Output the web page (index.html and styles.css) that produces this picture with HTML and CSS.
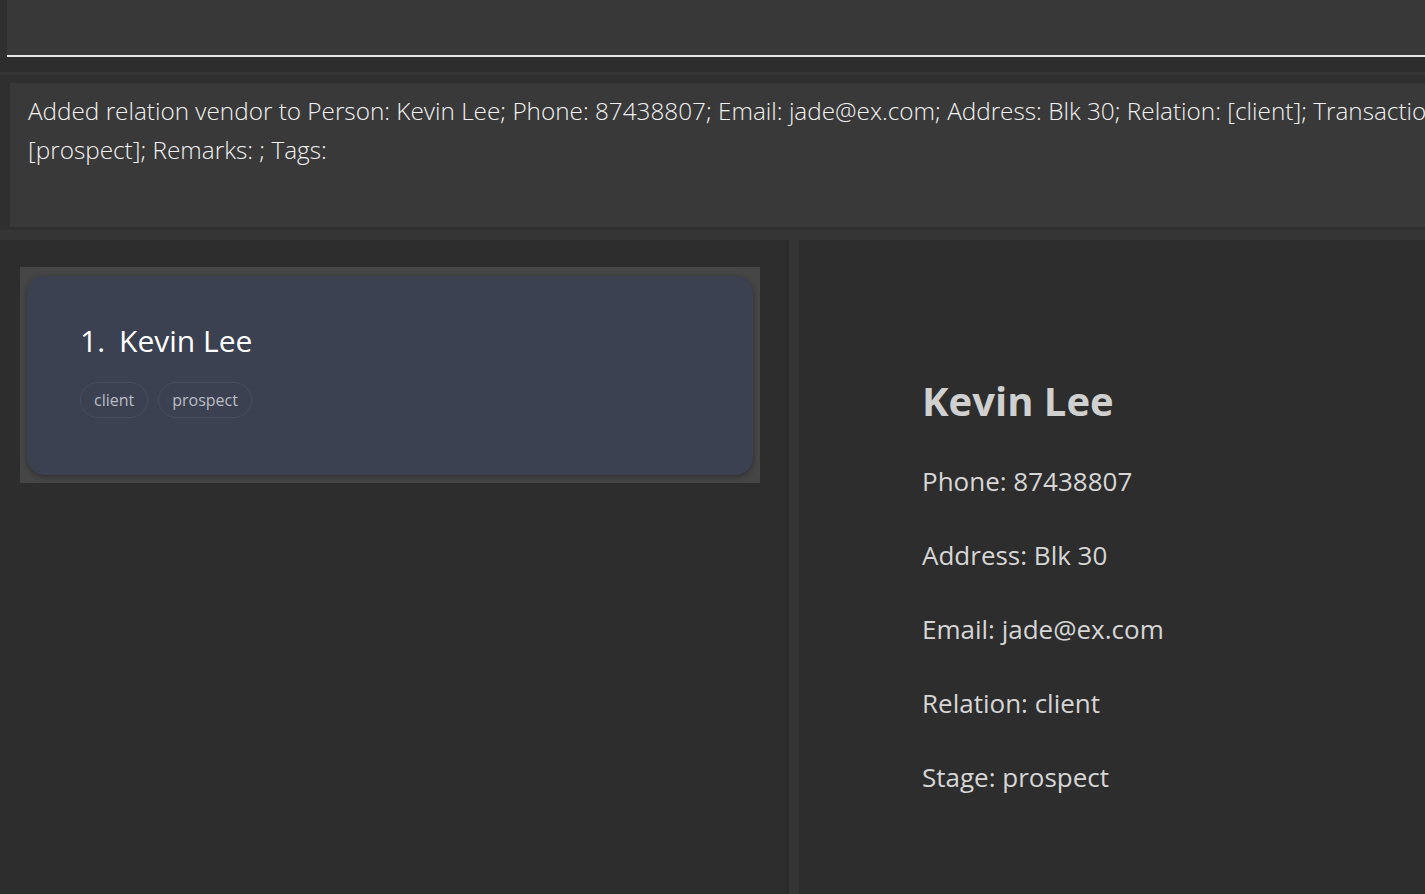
FILE: index.html
```html
<!DOCTYPE html>
<html>
<head>
<meta charset="utf-8">
<link rel="stylesheet" href="styles.css">
</head>
<body>
<div class="app">
  <div class="command-bar">
    <div class="command-field"></div>
  </div>
  <div class="result-wrap">
    <div class="result-box">Added relation vendor to Person: Kevin Lee; Phone: 87438807; Email: jade@ex.com; Address: Blk 30; Relation: [client]; Transaction Stage: [prospect]; Remarks: ; Tags:</div>
  </div>
  <div class="band"></div>
  <div class="main">
    <div class="list-panel">
      <div class="card-cell">
        <div class="card">
          <div class="card-name"><span class="idx">1.</span>Kevin Lee</div>
          <div class="tags">
            <span class="tag">client</span>
            <span class="tag">prospect</span>
          </div>
        </div>
      </div>
    </div>
    <div class="divider"></div>
    <div class="detail-panel">
      <h1 class="detail-name">Kevin Lee</h1>
      <p class="detail-line">Phone: 87438807</p>
      <p class="detail-line">Address: Blk 30</p>
      <p class="detail-line">Email: jade@ex.com</p>
      <p class="detail-line">Relation: client</p>
      <p class="detail-line">Stage: prospect</p>
    </div>
  </div>
</div>
</body>
</html>
```
FILE: styles.css
```css
html, body {
  margin: 0;
  padding: 0;
  background: #2d2d2d;
  font-family: "Open Sans", "Noto Sans", sans-serif;
  overflow: hidden;
}
.app {
  width: 1425px;
  height: 894px;
  display: flex;
  flex-direction: column;
  overflow: hidden;
}
.command-bar {
  height: 57px;
  padding-left: 7px;
  background: #2f2f2f;
  box-sizing: border-box;
}
.command-field {
  height: 57px;
  background: #383838;
  border-bottom: 2px solid #e6e6e6;
  box-sizing: border-box;
}
.result-wrap {
  margin-top: 15px;
  border-top: 3px solid #353535;
  padding: 8px 0 3px 10px;
  background: #2f2f2f;
  overflow: hidden;
}
.result-box {
  height: 144px;
  background: #393939;
  color: #f2f2f2;
  font-size: 24.3px;
  line-height: 39px;
  padding: 8px 0 0 18px;
  box-sizing: border-box;
  white-space: normal;
  width: 1560px;
  overflow: hidden;
  font-weight: 300;
}
.band {
  height: 10px;
  background: #353535;
}
.main {
  flex: 1;
  display: flex;
}
.list-panel {
  width: 787px;
  background: #2d2d2d;
  padding: 27px 0 0 20px;
  box-sizing: border-box;
}
.card-cell {
  width: 740px;
  height: 216px;
  background: #464646;
  padding: 9px 7px 8px 7px;
  box-sizing: border-box;
}
.card {
  height: 100%;
  background: #3b4150;
  border-radius: 18px;
  box-shadow: 0 2px 6px rgba(0,0,0,0.35);
  padding: 45px 0 0 53px;
  box-sizing: border-box;
}
.card-name {
  color: #ffffff;
  font-size: 30px;
  line-height: 40px;
  font-weight: 400;
}
.idx {
  margin-right: 14px;
}
.tags {
  display: flex;
  gap: 10px;
  margin-top: 21px;
}
.tag {
  display: inline-block;
  height: 36px;
  line-height: 34px;
  padding: 0 13px;
  border: 1px solid #474d5c;
  border-radius: 18px;
  color: #b9bdc6;
  font-size: 16px;
  box-sizing: border-box;
}
.divider {
  width: 12px;
  background: #353535;
  border-left: 2px solid #2a2a2a;
  box-sizing: border-box;
}
.detail-panel {
  flex: 1;
  background: #2d2d2d;
  padding: 134px 0 0 123px;
  box-sizing: border-box;
}
.detail-name {
  margin: 0 0 35px 0;
  color: #d0d0d0;
  font-size: 40px;
  line-height: 54px;
  font-weight: 700;
}
.detail-line {
  margin: 0 0 38px 0;
  color: #d6d6d6;
  font-size: 26px;
  line-height: 36px;
}
```
